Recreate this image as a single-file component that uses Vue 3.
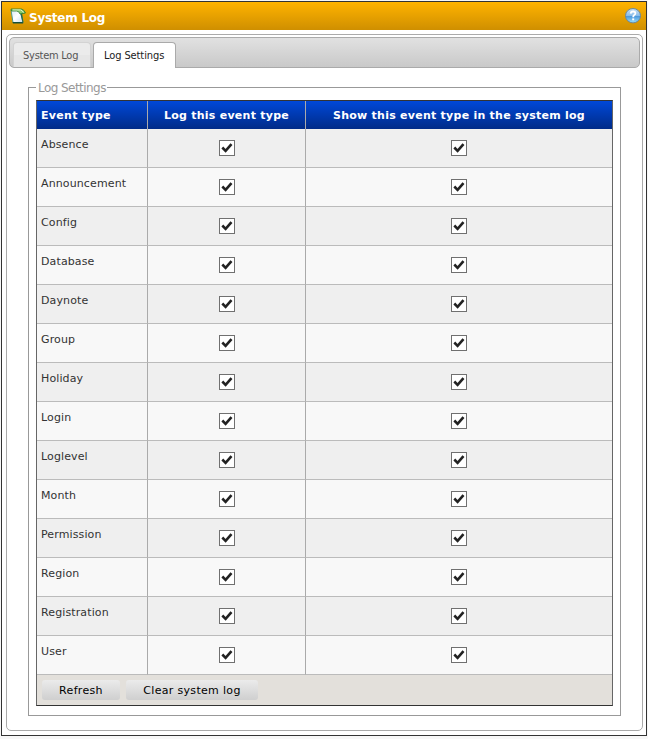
<script setup>
import { reactive } from 'vue'

const events = reactive(
  [
    'Absence', 'Announcement', 'Config', 'Database', 'Daynote', 'Group', 'Holiday',
    'Login', 'Loglevel', 'Month', 'Permission', 'Region', 'Registration', 'User',
  ].map((name) => ({ name, log: true, show: true }))
)
</script>

<template>
  <div class="page">
    <div class="window">
      <header class="title-bar">
        <svg class="title-icon" width="16" height="16" viewBox="0 0 16 16">
          <defs>
            <linearGradient id="paper" x1="0" y1="0" x2="1" y2="1">
              <stop offset="0" stop-color="#d4e8f4" />
              <stop offset=".5" stop-color="#ffffff" />
              <stop offset="1" stop-color="#c5def0" />
            </linearGradient>
          </defs>
          <path d="M1 2 L10.500 2 L13 14.500 L3 14.500 Z" fill="url(#paper)" stroke="#4e9a8c" stroke-width="1" />
          <path d="M2.500 14 L13 14 L13.200 15.500 L3 15.500 Z" fill="#14503c" />
          <path d="M10 4.500 L12 5 L13.500 14.500 L12.500 14.500 Z" fill="#276a4c" />
          <path d="M1 1 L11.500 1 Q14 1.500 15.500 5 L10 6 Q9 3 6.500 3 L1.500 3 Z" fill="#86c86a" stroke="#28792c" stroke-width=".8" />
          <path d="M2.500 1.900 L10.500 1.900 Q12.500 2.700 13.500 4.500" stroke="#e2f6c8" fill="none" />
        </svg>
        <span class="title">System Log</span>
        <svg class="help" width="16" height="16" viewBox="0 0 16 16">
          <defs>
            <linearGradient id="ball" x1="0" y1="0" x2="0" y2="1">
              <stop offset="0" stop-color="#c5def5" />
              <stop offset=".48" stop-color="#8fc0ea" />
              <stop offset=".54" stop-color="#4c98dc" />
              <stop offset="1" stop-color="#98e0ff" />
            </linearGradient>
          </defs>
          <ellipse cx="8" cy="7.700" rx="7.500" ry="7.200" fill="url(#ball)" stroke="#6b8797" stroke-width="1" />
          <path d="M5.700 5.600 Q5.900 3.500 8.100 3.500 Q10.400 3.500 10.400 5.300 Q10.400 6.500 9 7.300 Q8.200 7.900 8.200 9.200" fill="none" stroke="#fff" stroke-width="1.800" />
          <rect x="7.200" y="10.400" width="2" height="1.900" fill="#fff" />
        </svg>
      </header>

      <div class="tabs">
        <nav class="tab-list">
          <a class="tab">System Log</a>
          <a class="tab active">Log Settings</a>
        </nav>

        <fieldset class="panel">
          <legend>Log Settings</legend>
          <div class="grid">
            <div class="row head">
              <div class="cell">Event type</div>
              <div class="cell">Log this event type</div>
              <div class="cell">Show this event type in the system log</div>
            </div>
            <div v-for="e in events" :key="e.name" class="row">
              <div class="cell name">{{ e.name }}</div>
              <div v-for="key in ['log', 'show']" :key="key" class="cell">
                <button class="check" type="button" @click="e[key] = !e[key]">
                  <svg v-if="e[key]" width="14" height="14" viewBox="0 0 14 14">
                    <path d="M2.300 6.500 L5.600 9.800 L11.500 3.200" fill="none" stroke="#222" stroke-width="2.600" />
                  </svg>
                </button>
              </div>
            </div>
            <div class="actions">
              <button class="btn refresh" type="button">Refresh</button>
              <button class="btn clear" type="button">Clear system log</button>
            </div>
          </div>
        </fieldset>
      </div>
    </div>
  </div>
</template>

<style>
body {
  background: #f7f7f7;
}
</style>

<style scoped>
* {
  box-sizing: border-box;
}
.page {
  height: 739px;
  padding: 1px;
  font-family: Verdana, "DejaVu Sans", sans-serif;
  font-size: 11px;
  color: #333;
}
.window {
  width: 646px;
  height: 735px;
  border: 1px solid #333;
  background: #fff;
}
.title-bar {
  display: flex;
  align-items: center;
  height: 28px;
  padding: 0 5px 0 8px;
  background: linear-gradient(#ffb300, #cf8f00);
}
.title {
  margin: 3px 0 0 3px;
  font-size: 12px;
  font-weight: bold;
  line-height: 16px;
  letter-spacing: -0.25px;
  color: #fff;
}
.help {
  margin-left: auto;
}
.tabs {
  width: 637px;
  height: 697px;
  margin: 4px 0 0 4px;
  padding: 2px;
  border: 1px solid #aaa;
  border-radius: 5px;
}
.tab-list {
  display: flex;
  align-items: flex-end;
  gap: 2px;
  height: 31px;
  padding-left: 3px;
  border: 1px solid #aaa;
  border-radius: 5px;
  background: linear-gradient(#e1e1e1, #c9c9c9);
}
.tab {
  width: 78px;
  height: 25px;
  padding-left: 9px;
  border: 1px solid #d3d3d3;
  border-bottom: 0;
  border-radius: 4px 4px 0 0;
  background: linear-gradient(#ebebeb 50%, #e6e6e6 50%);
  font-family: Tahoma, "DejaVu Sans Condensed", "DejaVu Sans", sans-serif;
  font-stretch: condensed;
  font-size: 11px;
  line-height: 25px;
  letter-spacing: -0.25px;
  white-space: nowrap;
  color: #555;
}
.tab.active {
  width: 83px;
  height: 26px;
  margin-bottom: -1px;
  padding-left: 10px;
  border-color: #aaa;
  background: #fff;
  letter-spacing: -0.1px;
  color: #212121;
}
.panel {
  width: 593px;
  height: 637px;
  margin: 11px 0 0 19px;
  padding: 4px 7px 0;
  border: 1px solid #999;
}
legend {
  height: 17px;
  margin-left: 0;
  padding: 0 1px 0 2px;
  font-size: 12px;
  line-height: 19px;
  letter-spacing: -0.55px;
  color: #999;
}
.grid {
  width: 577px;
  border: 1px solid #666;
  border-top-color: #333;
  border-bottom-color: #333;
}
.row {
  display: grid;
  grid-template-columns: 111px 158px 306px;
  height: 39px;
  background: #efefef;
}
.row:nth-child(odd) {
  background: #f8f8f8;
}
.cell {
  display: flex;
  justify-content: center;
  padding: 11px 0 0;
  border-right: 1px solid #aaa;
  border-bottom: 1px solid #bbb;
}
.cell:last-child {
  border-right: 0;
}
.cell.name {
  justify-content: flex-start;
  padding: 9px 0 0 4px;
  line-height: 13px;
  letter-spacing: 0.12px;
}
.row.head {
  height: 28px;
  background: linear-gradient(#0048d8, #002b88);
  color: #fff;
  font-weight: bold;
  line-height: 30px;
  letter-spacing: 0.25px;
}
.head .cell {
  padding: 0;
  border-bottom: 0;
}
.head .cell:first-child {
  justify-content: flex-start;
  padding-left: 4px;
  letter-spacing: 0.3px;
}
.check {
  display: block;
  width: 16px;
  height: 16px;
  padding: 0;
  border: 1px solid #707070;
  background: #fff;
}
.check svg {
  display: block;
}
.actions {
  display: flex;
  gap: 6px;
  height: 30px;
  padding: 5px;
  background: #e3e0db;
}
.btn {
  height: 20px;
  padding: 0;
  border: 0;
  border-radius: 3px;
  background: linear-gradient(#ebebeb, #cfcfcf);
  font: inherit;
  line-height: 21px;
  letter-spacing: 0.32px;
  color: #000;
}
.refresh {
  width: 78px;
}
.clear {
  width: 132px;
}
</style>
